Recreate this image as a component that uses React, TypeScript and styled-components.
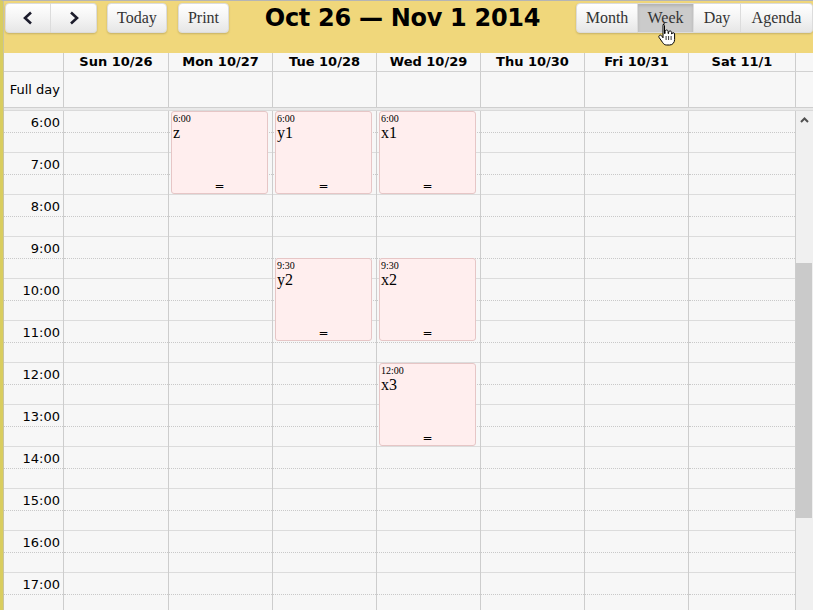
import styled, { createGlobalStyle } from "styled-components";

const GlobalStyle = createGlobalStyle`
  html, body {
    margin: 0;
    padding: 0;
    background: #f7f7f7;
  }
  body {
    font-family: "DejaVu Sans", Verdana, sans-serif;
  }
`;

const Page = styled.div`
  position: relative;
  width: 813px;
  height: 610px;
  overflow: hidden;
  box-sizing: border-box;
  border-top: 1px solid #b5b5b5;
  border-left: 3px solid #d9cd5f;
  display: flex;
  flex-direction: column;
  background: #f7f7f7;
`;

const Inner = styled.div`
  flex: 1;
  display: flex;
  flex-direction: column;
  border-left: 1px solid #c9c4a0;
  min-height: 0;
`;

const Toolbar = styled.div`
  height: 52px;
  flex: 0 0 52px;
  box-sizing: border-box;
  padding: 2px 0 0 1px;
  display: flex;
  align-items: flex-start;
  background: #f0d77b;
`;

const Group = styled.div<{ $gap?: number }>`
  display: flex;
  margin-right: ${(p) => p.$gap ?? 0}px;
  border-radius: 4px;
  box-shadow: 0 1px 2px rgba(0, 0, 0, 0.18);
`;

const Btn = styled.button<{ $w: number; $active?: boolean }>`
  width: ${(p) => p.$w}px;
  height: 30px;
  padding: 0;
  margin: 0;
  box-sizing: border-box;
  display: flex;
  align-items: center;
  justify-content: center;
  font-family: "Liberation Serif", "Times New Roman", serif;
  font-size: 16px;
  color: #333;
  border: 1px solid #dcdcdc;
  border-left-width: 0;
  background: ${(p) =>
    p.$active ? "#cbcbcb" : "linear-gradient(#ffffff 0%, #f4f4f4 50%, #e6e6e6 100%)"};
  box-shadow: ${(p) => (p.$active ? "inset 0 2px 3px rgba(0,0,0,0.12)" : "none")};
  &:first-child {
    border-left-width: 1px;
    border-radius: 4px 0 0 4px;
  }
  &:last-child {
    border-radius: 0 4px 4px 0;
  }
  &:only-child {
    border-radius: 4px;
  }
`;

const Title = styled.h2`
  flex: 1;
  margin: 0;
  height: 30px;
  line-height: 31px;
  text-align: center;
  font-family: "DejaVu Sans", Verdana, sans-serif;
  font-weight: bold;
  font-size: 24px;
  letter-spacing: -0.3px;
  color: #000;
`;

const Row = styled.div`
  display: grid;
  grid-template-columns: 59px 105px repeat(5, 104px) 107px 1fr;
`;

const HeadCell = styled.div<{ $first?: boolean }>`
  height: 19px;
  line-height: 18px;
  box-sizing: border-box;
  border-left: ${(p) => (p.$first ? "none" : "1px solid #cdcdcd")};
  border-bottom: 1px solid #d2d2d2;
  text-align: center;
  font-size: 13px;
  font-weight: bold;
  color: #000;
`;

const AllDayCell = styled.div<{ $first?: boolean }>`
  height: 35px;
  box-sizing: border-box;
  border-left: ${(p) => (p.$first ? "none" : "1px solid #cdcdcd")};
  display: flex;
  align-items: center;
  justify-content: flex-end;
  padding-right: 3px;
  font-size: 13px;
  color: #000;
`;

const Divider = styled.div`
  height: 4px;
  flex: 0 0 4px;
  box-sizing: border-box;
  border-top: 1px solid #cfcfcf;
  border-bottom: 1px solid #dadada;
  background: #e9e9e9;
`;

const Body = styled(Row)`
  flex: 1;
  min-height: 0;
  overflow: hidden;
`;

const Column = styled.div<{ $first?: boolean }>`
  position: relative;
  border-left: ${(p) => (p.$first ? "none" : "1px solid #cdcdcd")};
`;

const Slot = styled.div`
  height: 42px;
  box-sizing: border-box;
  border-bottom: 1px solid #dcdcdc;
`;

const Half = styled.div`
  height: 22px;
  box-sizing: border-box;
  border-bottom: 1px dotted #c9c9c9;
`;

const TimeLabel = styled.div`
  padding: 4px 3px 0 0;
  line-height: 16px;
  text-align: right;
  font-size: 13px;
  color: #000;
`;

const Event = styled.div`
  position: absolute;
  left: 2px;
  right: 4px;
  box-sizing: border-box;
  border: 1px solid #e6c6c6;
  border-radius: 3px;
  background: #ffeeee;
  font-family: "Liberation Serif", "Times New Roman", serif;
  color: #000;
  overflow: hidden;
`;

const EventTime = styled.div`
  padding: 1px 0 0 1px;
  font-size: 10px;
  line-height: 11px;
`;

const EventTitle = styled.div`
  padding-left: 1px;
  font-size: 16px;
  line-height: 18px;
`;

const Handle = styled.div`
  position: absolute;
  left: 0;
  right: 0;
  bottom: 1px;
  text-align: center;
  font-size: 12px;
  line-height: 12px;
  font-family: "DejaVu Sans", sans-serif;
`;

const Track = styled.div`
  border-left: 1px solid #cdcdcd;
  background: #f0f0f0;
  display: flex;
  flex-direction: column;
`;

const ArrowBox = styled.div`
  height: 17px;
  display: flex;
  align-items: center;
  justify-content: center;
`;

const Thumb = styled.div`
  margin: 135px 1px 0 0;
  height: 255px;
  background: #cacaca;
`;

const Cursor = styled.svg`
  position: absolute;
  left: 653px;
  top: 22px;
`;

const days = [
  "Sun 10/26",
  "Mon 10/27",
  "Tue 10/28",
  "Wed 10/29",
  "Thu 10/30",
  "Fri 10/31",
  "Sat 11/1",
];

const hours = Array.from({ length: 12 }, (_, i) => i + 6);

const events = [
  { day: 1, start: 6, end: 8, time: "6:00", title: "z" },
  { day: 2, start: 6, end: 8, time: "6:00", title: "y1" },
  { day: 3, start: 6, end: 8, time: "6:00", title: "x1" },
  { day: 2, start: 9.5, end: 11.5, time: "9:30", title: "y2" },
  { day: 3, start: 9.5, end: 11.5, time: "9:30", title: "x2" },
  { day: 3, start: 12, end: 14, time: "12:00", title: "x3" },
];

const HOUR = 42;

const Chevron = ({ dir }: { dir: "left" | "right" }) => (
  <svg width="12" height="14" viewBox="0 0 12 14">
    <path
      d={dir === "left" ? "M9 1.5 L3 7 L9 12.5" : "M3 1.5 L9 7 L3 12.5"}
      fill="none"
      stroke="#1c1c2c"
      strokeWidth="2.6"
    />
  </svg>
);

export default function App() {
  return (
    <Page>
      <GlobalStyle />
      <Inner>
        <Toolbar>
          <Group $gap={10}>
            <Btn $w={46}>
              <Chevron dir="left" />
            </Btn>
            <Btn $w={46}>
              <Chevron dir="right" />
            </Btn>
          </Group>
          <Group $gap={11}>
            <Btn $w={60}>Today</Btn>
          </Group>
          <Group>
            <Btn $w={51}>Print</Btn>
          </Group>
          <Title>Oct 26 — Nov 1 2014</Title>
          <Group>
            <Btn $w={62}>Month</Btn>
            <Btn $w={56} $active>
              Week
            </Btn>
            <Btn $w={47}>Day</Btn>
            <Btn $w={72}>Agenda</Btn>
          </Group>
        </Toolbar>

        <Row>
          <HeadCell $first />
          {days.map((d) => (
            <HeadCell key={d}>{d}</HeadCell>
          ))}
          <HeadCell />
        </Row>
        <Row>
          <AllDayCell $first>Full day</AllDayCell>
          {days.map((d) => (
            <AllDayCell key={d} />
          ))}
          <AllDayCell />
        </Row>
        <Divider />

        <Body>
          <Column $first>
            {hours.map((h) => (
              <Slot key={h}>
                <Half>
                  <TimeLabel>{h}:00</TimeLabel>
                </Half>
              </Slot>
            ))}
          </Column>
          {days.map((d, i) => (
            <Column key={d}>
              {hours.map((h) => (
                <Slot key={h}>
                  <Half />
                </Slot>
              ))}
              {events
                .filter((e) => e.day === i)
                .map((e) => (
                  <Event
                    key={e.title}
                    style={{
                      top: (e.start - 6) * HOUR,
                      height: (e.end - e.start) * HOUR - 1,
                    }}
                  >
                    <EventTime>{e.time}</EventTime>
                    <EventTitle>{e.title}</EventTitle>
                    <Handle>=</Handle>
                  </Event>
                ))}
            </Column>
          ))}
          <Track>
            <ArrowBox>
              <svg width="9" height="6" viewBox="0 0 9 6">
                <path d="M1 5 L4.5 1.5 L8 5" fill="none" stroke="#505050" strokeWidth="2" />
              </svg>
            </ArrowBox>
            <Thumb />
          </Track>
        </Body>
      </Inner>

      <Cursor width="22" height="25" viewBox="0 0 22 25">
        <path
          d="M7 1.5c.8 0 1.5.7 1.5 1.5v7.5h.6v-2c0-.8.7-1.5 1.5-1.5s1.5.7 1.5 1.5v2h.5v-1c0-.8.7-1.5 1.5-1.5s1.5.7 1.5 1.5v1.5h.3c0-.8.6-1.3 1.3-1.3s1.4.6 1.4 1.3v5.5c0 3-2 5.5-5 5.5h-3c-2 0-3-1-4-2.5l-3.5-5c-.5-.8-.3-1.7.4-2.1.7-.5 1.6-.3 2.1.4l1.4 2v-12.5c0-.8.7-1.5 1.5-1.5z"
          fill="#fff"
          stroke="#000"
          strokeWidth="1"
        />
        <path d="M10.1 13v4M12.6 13v4M15.1 13v4" stroke="#000" strokeWidth="0.8" />
      </Cursor>
    </Page>
  );
}
